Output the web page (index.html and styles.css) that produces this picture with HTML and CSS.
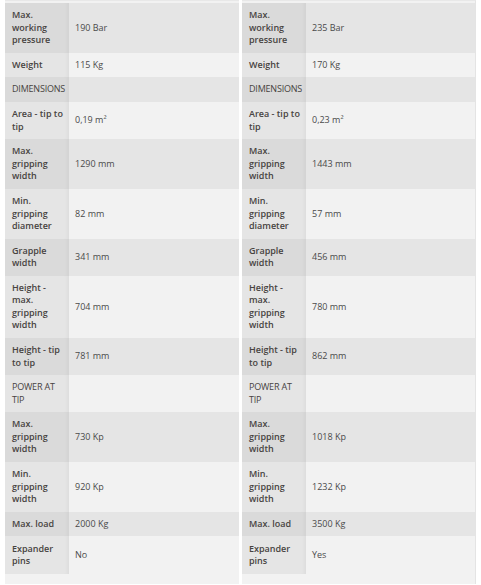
FILE: index.html
```html
<!DOCTYPE html>
<html>
<head>
<meta charset="utf-8">
<link rel="stylesheet" href="styles.css">
</head>
<body>
<div class="wrap">
  <div class="panel">
    <table class="specs">
      <tr><th>Max. working pressure</th><td>190 Bar</td></tr>
      <tr><th>Weight</th><td>115 Kg</td></tr>
      <tr class="sec"><th>DIMENSIONS</th><td></td></tr>
      <tr><th>Area - tip to tip</th><td>0,19 m²</td></tr>
      <tr><th>Max. gripping width</th><td>1290 mm</td></tr>
      <tr><th>Min. gripping diameter</th><td>82 mm</td></tr>
      <tr><th>Grapple width</th><td>341 mm</td></tr>
      <tr><th>Height - max. gripping width</th><td>704 mm</td></tr>
      <tr><th>Height - tip to tip</th><td>781 mm</td></tr>
      <tr class="sec"><th>POWER AT TIP</th><td></td></tr>
      <tr><th>Max. gripping width</th><td>730 Kp</td></tr>
      <tr><th>Min. gripping width</th><td>920 Kp</td></tr>
      <tr><th>Max. load</th><td>2000 Kg</td></tr>
      <tr><th>Expander pins</th><td>No</td></tr>
    </table>
  </div>
  <div class="panel panel-right">
    <table class="specs">
      <tr><th>Max. working pressure</th><td>235 Bar</td></tr>
      <tr><th>Weight</th><td>170 Kg</td></tr>
      <tr class="sec"><th>DIMENSIONS</th><td></td></tr>
      <tr><th>Area - tip to tip</th><td>0,23 m²</td></tr>
      <tr><th>Max. gripping width</th><td>1443 mm</td></tr>
      <tr><th>Min. gripping diameter</th><td>57 mm</td></tr>
      <tr><th>Grapple width</th><td>456 mm</td></tr>
      <tr><th>Height - max. gripping width</th><td>780 mm</td></tr>
      <tr><th>Height - tip to tip</th><td>862 mm</td></tr>
      <tr class="sec"><th>POWER AT TIP</th><td></td></tr>
      <tr><th>Max. gripping width</th><td>1018 Kp</td></tr>
      <tr><th>Min. gripping width</th><td>1232 Kp</td></tr>
      <tr><th>Max. load</th><td>3500 Kg</td></tr>
      <tr><th>Expander pins</th><td>Yes</td></tr>
    </table>
  </div>
</div>
</body>
</html>
```
FILE: styles.css
```css
html, body {
  margin: 0;
  padding: 0;
  background: #ffffff;
}
body {
  font-family: "Open Sans", "Liberation Sans", sans-serif;
  font-size: 9px;
  color: #4a4a4a;
}
.wrap {
  display: flex;
  gap: 3px;
  padding-left: 5px;
}
.panel {
  width: 234px;
  background: #f2f2f2;
  border-top: 1px solid #e8e8e8;
  padding-top: 2px;
  padding-bottom: 10px;
}
.panel-right {
  width: 233px;
  border-right: 1px solid #e4e4e4;
}
.specs {
  width: 100%;
  border-collapse: collapse;
  table-layout: fixed;
}
.specs th,
.specs td {
  padding: 6.1px 4px 6.1px 7px;
  line-height: 12.5px;
  vertical-align: middle;
  text-align: left;
}
.specs th {
  width: 53px;
  font-weight: 600;
  color: #474341;
  background: #e5e5e5;
  box-shadow: inset -4px 0 4px -3px rgba(0, 0, 0, 0.05);
}
.specs td {
  padding-left: 6px;
  background: #f2f2f2;
  font-weight: 400;
}
.specs tr:nth-child(odd) th {
  background: #dadada;
}
.specs tr:nth-child(odd) td {
  background: #e5e5e5;
}
.specs tr.sec th {
  font-weight: 400;
  letter-spacing: -0.2px;
}
```
